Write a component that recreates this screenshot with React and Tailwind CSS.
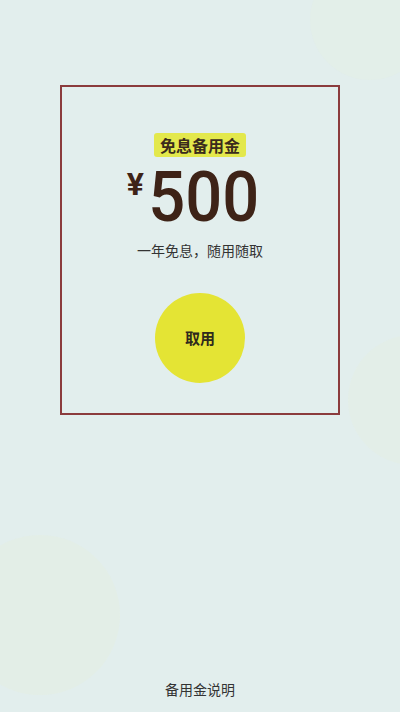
import React from 'react';

export default function App() {
  return (
    <div
      className="relative h-[712px] w-[400px] overflow-hidden bg-[#e2eeed] flex flex-col"
      style={{ fontFamily: '"Noto Sans CJK SC", "Noto Sans", sans-serif' }}
    >
      {/* faint background blobs */}
      <div className="absolute left-[-40px] top-[535px] h-[160px] w-[160px] rounded-full bg-[#e4efe2] opacity-60" />
      <div className="absolute left-[310px] top-[-40px] h-[120px] w-[120px] rounded-full bg-[#e4efe6] opacity-50" />
      <div className="absolute left-[348px] top-[335px] h-[130px] w-[130px] rounded-full bg-[#e4efe4] opacity-60" />

      <div className="relative pt-[85px] flex justify-center">
        <section className="w-[280px] h-[330px] border-2 border-[#8b3b3d] flex flex-col items-center pt-[46px]">
          <span className="h-[24px] px-[6px] rounded-[3px] bg-[#e3e84c] text-[16px] leading-[24px] font-bold text-[#3a2b1c]">
            免息备用金
          </span>

          <div className="flex items-start pr-[10px] mt-[14px]">
            <span
              className="text-[32px] leading-none font-bold text-[#3e2317] mt-[-3px] mr-[0px]"
              style={{ fontFamily: 'Roboto, sans-serif' }}
            >
              ¥
            </span>
            <span
              className="text-[70px] leading-[52px] font-medium text-[#3e2317] scale-x-[0.93]"
              style={{ fontFamily: 'Roboto, sans-serif' }}
            >
              500
            </span>
          </div>

          <p className="mt-[17px] text-[14px] leading-[20px] text-[#333333]">一年免息，随用随取</p>

          <button className="mt-[33px] h-[90px] w-[90px] rounded-full bg-[#e4e434] text-[15px] font-bold text-[#2f2a1c]">
            取用
          </button>
        </section>
      </div>

      <div className="flex-1" />
      <p className="relative pb-[13px] text-center text-[14px] leading-[20px] text-[#333333]">备用金说明</p>
    </div>
  );
}
